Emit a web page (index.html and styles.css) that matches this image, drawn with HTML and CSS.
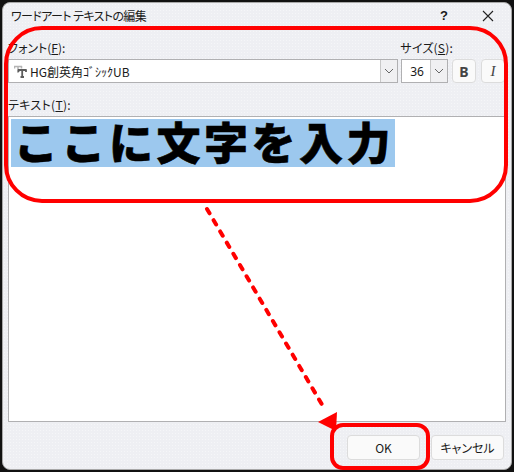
FILE: index.html
```html
<!DOCTYPE html>
<html lang="ja">
<head>
<meta charset="utf-8">
<title>ワードアート テキストの編集</title>
<link rel="stylesheet" href="styles.css">
</head>
<body>
<div class="dialog">
  <div class="titlebar">
    <span class="title">ワードアート テキストの編集</span>
    <span class="help">?</span>
    <svg class="close" width="12" height="12" viewBox="0 0 12 12"><path d="M1 1L11 11M11 1L1 11" stroke="#222" stroke-width="1.100" fill="none"/></svg>
  </div>
  <div class="content">
    <div class="labels">
      <span>フォント(<u>F</u>):</span>
      <span class="size-label">サイズ(<u>S</u>):</span>
    </div>
    <div class="controls">
      <div class="combo font-combo">
        <svg class="tt" width="13" height="13" viewBox="0 0 13 13"><path d="M0 1.500H8M0.500 1V3.500M7.500 1V3.500M4 1.500V8" stroke="#b4b4b4" stroke-width="1.500" fill="none"/><path d="M4 5H12.500M4.500 4.500V7M12 4.500V7M8.200 5V12M6.500 12H10" stroke="#5c5c5c" stroke-width="1.800" fill="none"/></svg>
        <span class="combo-text">HG創英角ｺﾞｼｯｸUB</span>
        <span class="arrow"><svg width="10" height="6" viewBox="0 0 10 6"><path d="M1 1L5 5L9 1" stroke="#666" fill="none"/></svg></span>
      </div>
      <div class="combo size-combo">
        <span class="size-text">36</span>
        <span class="arrow"><svg width="10" height="6" viewBox="0 0 10 6"><path d="M1 1L5 5L9 1" stroke="#666" fill="none"/></svg></span>
      </div>
      <button class="fmt bold">B</button>
      <button class="fmt italic">I</button>
    </div>
    <div class="text-label">テキスト(<u>T</u>):</div>
    <div class="textbox"><span class="selected">ここに文字を入力</span></div>
    <div class="buttons">
      <button class="btn">OK</button>
      <button class="btn">キャンセル</button>
    </div>
  </div>
</div>
<div class="mark mark-top"></div>
<div class="mark mark-ok"></div>
<svg class="arrow-mark" width="514" height="472" viewBox="0 0 514 472">
  <path d="M207 209L324 408" stroke="#f00" stroke-width="4" stroke-linecap="round" stroke-dasharray="5 8" fill="none"/>
  <path d="M337 412L318 422L336 431Z" fill="#f00"/>
</svg>
</body>
</html>
```
FILE: styles.css
```css
* { box-sizing: border-box; }
html, body { margin: 0; padding: 0; }
body {
  width: 514px;
  height: 472px;
  background: #111;
  overflow: hidden;
  position: relative;
  padding: 2px;
  font-family: "Noto Sans CJK JP", "Liberation Sans", sans-serif;
  font-size: 12px;
  color: #1a1a1a;
}
.dialog {
  width: 510px;
  height: 468px;
  border: 1px solid #a8a8a8;
  border-radius: 8px;
  background-color: #eeeff3;
  background-image: radial-gradient(#f5f6f8 0.6px, transparent 0.7px);
  background-size: 3px 3px;
  display: flex;
  flex-direction: column;
}
.titlebar {
  height: 25px;
  display: flex;
  align-items: center;
  padding: 0 17px 0 8px;
  flex: none;
}
.title { flex: 1; font-feature-settings: "palt"; letter-spacing: -0.6px; }
.help { font-weight: 700; margin-right: 34px; font-family: "Liberation Sans", sans-serif; font-size: 13px; }
.close { flex: none; }
.content {
  flex: 1;
  display: flex;
  flex-direction: column;
  padding: 10px 5px 0 5px;
}
.labels {
  display: flex;
  height: 21px;
  line-height: 20px;
  padding-right: 53px;
  font-feature-settings: "palt";
}
.size-label { margin-left: auto; letter-spacing: 0.2px; }
.controls { display: flex; height: 24px; }
.combo {
  background: #fff;
  border: 1px solid #b0b0b2;
  display: flex;
  align-items: center;
  height: 24px;
}
.font-combo { width: 390px; padding-left: 5px; }
.tt { margin-right: 3px; flex: none; }
.combo-text { flex: 1; font-size: 12px; }
.size-combo { width: 47px; margin-left: 3px; }
.size-text { flex: 1; text-align: center; font-family: "Noto Sans", sans-serif; font-size: 12px; padding-left: 2px; }
.arrow {
  width: 17px;
  height: 22px;
  flex: none;
  display: flex;
  align-items: center;
  justify-content: center;
  border-left: 1px solid #c8c8c8;
  background: #f0f0f2;
}
.fmt {
  width: 24px;
  height: 24px;
  padding: 0;
  border: 1px solid #dcdcdc;
  border-radius: 4px;
  background: #fafafa;
  color: #444;
}
.bold { margin-left: 4px; font-family: "Noto Sans", sans-serif; font-weight: 700; font-size: 14px; }
.italic { margin-left: 5px; font-family: "Liberation Serif", serif; font-style: italic; font-size: 15px; }
.text-label { margin-top: 12px; height: 20px; line-height: 20px; font-feature-settings: "palt"; letter-spacing: 0.3px; }
.textbox {
  width: 498px;
  height: 306px;
  margin-top: 1px;
  background: #fff;
  border: 1px solid #b0b0b2;
  padding: 2px;
}
.selected {
  display: block;
  height: 48px;
  width: 384px;
  background: #9cc8ee;
  color: #000;
  font-size: 44px;
  font-weight: 900;
  line-height: 45px;
  letter-spacing: 3.5px;
  padding: 0 1px 0 3px;
  white-space: nowrap;
  -webkit-text-stroke: 0.6px #000;
}
.buttons {
  display: flex;
  justify-content: flex-end;
  gap: 11px;
  margin-top: 13px;
  padding-right: 2px;
}
.btn {
  width: 73px;
  height: 25px;
  padding: 0;
  border: 1px solid #dcdcdc;
  border-radius: 4px;
  background: #fafafa;
  font-family: inherit;
  font-size: 12px;
  color: #1a1a1a;
}
.btn:last-child { font-feature-settings: "palt"; }
.mark {
  position: absolute;
  border: 4px solid #f00;
  pointer-events: none;
}
.mark-top { left: 4px; top: 26px; width: 504px; height: 177px; border-radius: 38px; }
.mark-ok { left: 330px; top: 423px; width: 100px; height: 47px; border-radius: 13px; }
.arrow-mark { position: absolute; left: 0; top: 0; }
```
